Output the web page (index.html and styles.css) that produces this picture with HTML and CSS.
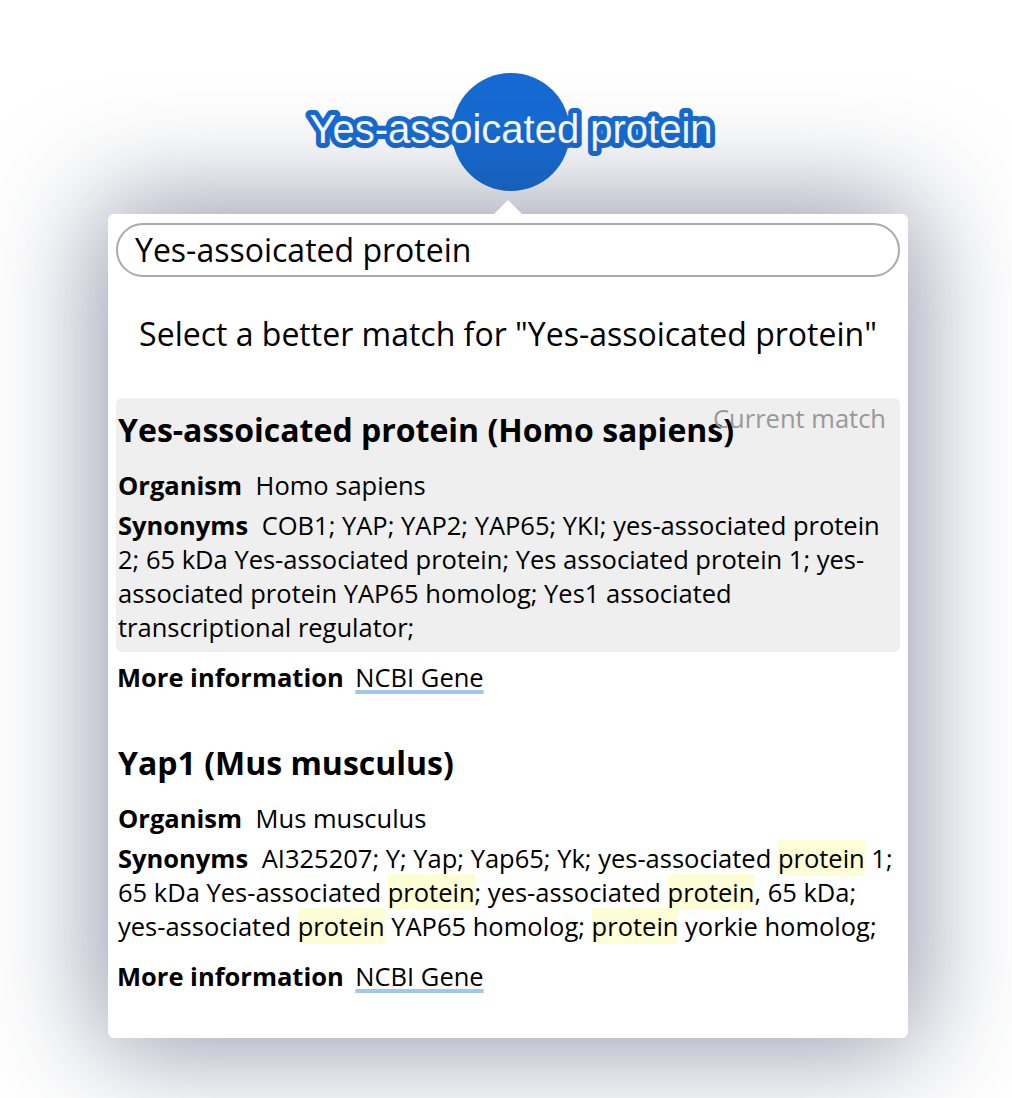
FILE: index.html
```html
<!DOCTYPE html>
<html lang="en">
<head>
<meta charset="utf-8">
<title>Select a better match</title>
<link rel="stylesheet" href="styles.css">
</head>
<body>
<div class="stage">
  <div class="graph">
    <div class="node">
      <div class="node-circle"></div>
      <svg class="node-label" width="460" height="70" viewBox="0 0 460 70">
        <text x="230" y="46" text-anchor="middle">Yes-assoicated protein</text>
      </svg>
    </div>
  </div>
  <div class="popup">
    <div class="popup-arrow"></div>
    <div class="search">Yes-assoicated protein</div>
    <div class="prompt">Select a better match for "Yes-assoicated protein"</div>

    <div class="match current">
      <div class="current-tag">Current match</div>
      <div class="match-title">Yes-assoicated protein (Homo sapiens)</div>
      <div class="field"><span class="key">Organism</span> Homo sapiens</div>
      <div class="field"><span class="key">Synonyms</span> COB1; YAP; YAP2; YAP65; YKI; yes-associated protein 2; 65 kDa Yes-associated protein; Yes associated protein 1; yes-associated protein YAP65 homolog; Yes1 associated transcriptional regulator;</div>
    </div>
    <div class="more"><span class="key">More information</span> <span class="link">NCBI Gene</span></div>

    <div class="match">
      <div class="match-title">Yap1 (Mus musculus)</div>
      <div class="field"><span class="key">Organism</span> Mus musculus</div>
      <div class="field"><span class="key">Synonyms</span> AI325207; Y; Yap; Yap65; Yk; yes-associated <mark>protein</mark> 1; 65 kDa Yes-associated <mark>protein</mark>; yes-associated <mark>protein</mark>, 65 kDa; yes-associated <mark>protein</mark> YAP65 homolog; <mark>protein</mark> yorkie homolog;</div>
    </div>
    <div class="more"><span class="key">More information</span> <span class="link">NCBI Gene</span></div>
  </div>
</div>
</body>
</html>
```

FILE: styles.css
```css
html, body {
  margin: 0;
  padding: 0;
  background: #ffffff;
}

body {
  font-family: "Open Sans", "Noto Sans", sans-serif;
  color: #000;
  width: 1012px;
  height: 1098px;
  overflow: hidden;
}

.stage {
  padding-left: 108px;
}

.graph {
  position: relative;
  height: 214px;
  width: 800px;
}

.node {
  position: absolute;
  left: 403px;
  top: 73px;
  width: 0;
  height: 0;
}

.node-circle {
  position: absolute;
  left: -59px;
  top: 0;
  width: 118px;
  height: 118px;
  border-radius: 50%;
  background: #156bd3;
}

.node-label {
  position: absolute;
  left: -230px;
  top: 24px;
  overflow: visible;
}

.node-label text {
  font-family: "Liberation Sans", Arial, sans-serif;
  font-size: 40px;
  letter-spacing: 0;
  fill: #ffffff;
  stroke: #156bd3;
  stroke-width: 10px;
  stroke-linejoin: round;
  paint-order: stroke fill;
}

.popup {
  position: relative;
  width: 800px;
  box-sizing: border-box;
  background: #fff;
  border-radius: 6px;
  padding: 9px 8px 45px 8px;
  box-shadow: 0 0 110px 10px rgba(40, 50, 90, 0.5);
}

.popup-arrow {
  position: absolute;
  left: 386px;
  top: -14px;
  width: 0;
  height: 0;
  border-left: 14px solid transparent;
  border-right: 14px solid transparent;
  border-bottom: 14px solid #fff;
}

.search {
  height: 54px;
  box-sizing: border-box;
  border: 2px solid #aaa;
  border-radius: 27px;
  padding-left: 17px;
  font-size: 32px;
  line-height: 50px;
}

.prompt {
  text-align: center;
  font-size: 32px;
  line-height: 44px;
  margin-top: 35px;
  margin-bottom: 42px;
}

.match {
  position: relative;
  padding: 10px 3px 8px 2px;
  border-radius: 6px;
}

.match.current {
  background: #efefef;
}

.current-tag {
  position: absolute;
  right: 14px;
  top: 3px;
  font-size: 25.5px;
  line-height: 34px;
  color: #999;
}

.match-title {
  font-size: 32px;
  font-weight: 700;
  line-height: 44px;
  margin-bottom: 16px;
}

.field {
  font-size: 25.5px;
  line-height: 34px;
}

.field + .field {
  margin-top: 6px;
}

.key {
  font-weight: 700;
  margin-right: 7px;
}

.more {
  font-size: 25.5px;
  line-height: 34px;
  padding-left: 1px;
  margin-top: 8px;
  margin-bottom: 37px;
}

.more .key {
  margin-right: 5px;
}

.more:last-child {
  margin-bottom: 0;
}

.link {
  text-decoration: underline;
  text-decoration-color: #a0c8ea;
  text-decoration-thickness: 4px;
  text-underline-offset: 3px;
}

mark {
  background: #fdfdd6;
  color: inherit;
  padding: 1px 0;
}
```
